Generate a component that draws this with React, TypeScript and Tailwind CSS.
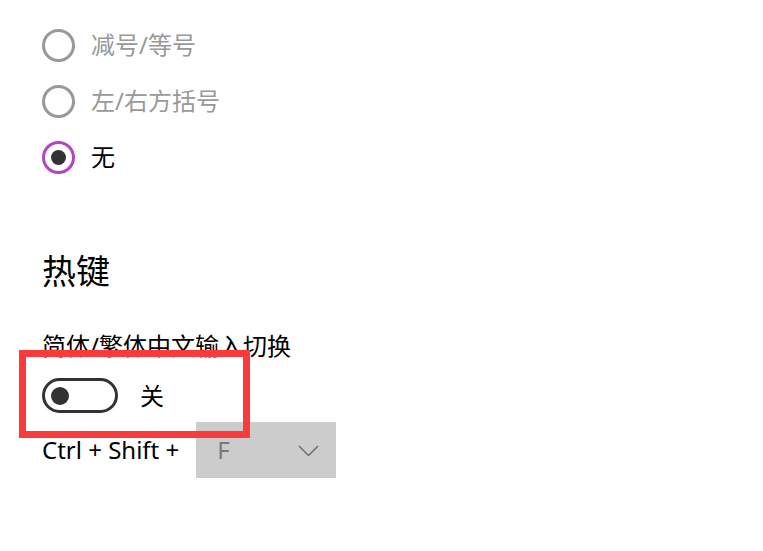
import React from "react";

const font = { fontFamily: '"Noto Sans", "Noto Sans CJK SC", sans-serif' };

function Radio({ label, checked }: { label: string; checked?: boolean }) {
  return (
    <div className="flex h-[56px] items-center gap-[16px]">
      <div
        className={
          checked
            ? "flex h-[33px] w-[33px] items-center justify-center rounded-full border-[3px] border-[#b146c2]"
            : "flex h-[33px] w-[33px] items-center justify-center rounded-full border-[3px] border-[#999999]"
        }
      >
        {checked && <div className="h-[15px] w-[15px] rounded-full bg-[#333333]" />}
      </div>
      <span className={checked ? "text-[24px] leading-none text-black" : "text-[24px] leading-none text-[#999999]"}>
        {label}
      </span>
    </div>
  );
}

export default function App() {
  return (
    <div className="relative h-[551px] w-[763px] overflow-hidden bg-white" style={font}>
      <div className="flex flex-col pl-[42px] pt-[17px]">
        {/* Options */}
        <Radio label="减号/等号" />
        <Radio label="左/右方括号" />
        <Radio label="无" checked />

        {/* Hotkeys */}
        <div className="mt-[66px] flex h-[40px] items-center text-[34px] leading-none text-black">热键</div>

        <div className="mt-[40px] flex h-[30px] items-center text-[24px] leading-none text-black">
          简体/繁体中文输入切换
        </div>

        <div className="mt-[17px] flex h-[35px] items-center gap-[22px]">
          <div className="flex h-[35px] w-[76px] items-center rounded-full border-[3px] border-[#333333] pl-[6px]">
            <div className="h-[18px] w-[18px] rounded-full bg-[#333333]" />
          </div>
          <span className="text-[24px] leading-none text-black">关</span>
        </div>

        <div className="mt-[9px] flex h-[56px] items-center gap-[17px]">
          <span className="text-[24px] leading-none text-black">Ctrl + Shift +</span>
          <div className="flex h-[56px] w-[140px] items-center justify-between bg-[#cccccc] pl-[21px] pr-[17px]">
            <span className="text-[24px] leading-none text-[#7a7a7a]">F</span>
            <svg width="21" height="11" viewBox="0 0 21 11" fill="none">
              <path d="M1 1l9.5 9.5L20 1" stroke="#6f6f6f" strokeWidth="1.5" />
            </svg>
          </div>
        </div>
      </div>

      {/* Highlight annotation */}
      <div className="absolute left-[19px] top-[350px] h-[88px] w-[231px] border-[7px] border-[#fb3b3b]" />
    </div>
  );
}
